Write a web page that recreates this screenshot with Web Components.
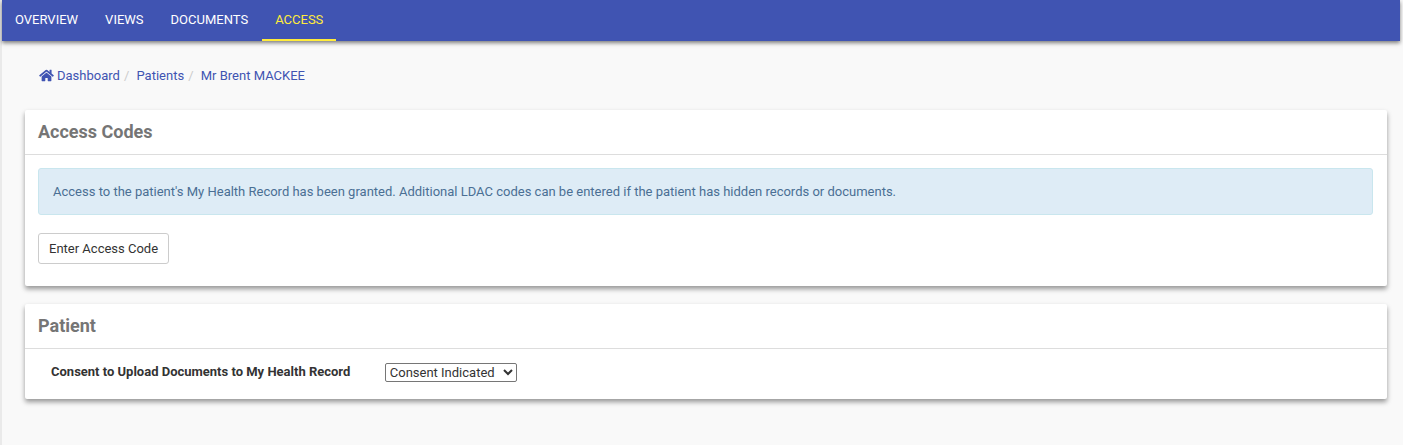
<!DOCTYPE html>
<html lang="en">
<head>
<meta charset="utf-8">
<title>Access</title>
<style>
  body {
    margin: 0;
    background: #f9f9f9;
    color: #333;
    font: 13px/18px Roboto, "Liberation Sans", sans-serif;
  }
</style>
</head>
<body>
<patient-page>
  <nav-tabs slot="nav">
    <nav-tab href="#overview">OVERVIEW</nav-tab>
    <nav-tab href="#views">VIEWS</nav-tab>
    <nav-tab href="#documents">DOCUMENTS</nav-tab>
    <nav-tab href="#access" active>ACCESS</nav-tab>
  </nav-tabs>
  <bread-crumbs>
    <bread-crumb href="#dashboard"><home-icon slot="icon"></home-icon>Dashboard</bread-crumb>
    <bread-crumb href="#patients">Patients</bread-crumb>
    <bread-crumb href="#patient">Mr Brent MACKEE</bread-crumb>
  </bread-crumbs>
  <content-card>
    <span slot="title">Access Codes</span>
    <info-alert>Access to the patient's My Health Record has been granted. Additional LDAC codes can be entered if the patient has hidden records or documents.</info-alert>
    <default-button>Enter Access Code</default-button>
  </content-card>
  <content-card compact>
    <span slot="title">Patient</span>
    <consent-field label="Consent to Upload Documents to My Health Record"></consent-field>
  </content-card>
</patient-page>

<script>
/** Attaches an open shadow root filled from the element's render() markup */
class BaseElement extends HTMLElement {
  connectedCallback() {
    if (this.shadowRoot) return;
    const template = document.createElement('template');
    template.innerHTML = this.render();
    this.attachShadow({mode: 'open'}).appendChild(template.content);
  }
}

class PatientPage extends BaseElement {
  render() {
    return `
      <style>
        :host {
          display: block;
          box-sizing: border-box;
          min-height: 100vh;
          border-left: 2px solid #eaeaea;
        }
        .nav { margin-right: 3px; }
        main {
          display: flex;
          flex-direction: column;
          gap: 18px;
          padding: 26px 16px 46px 23px;
        }
      </style>
      <div class="nav"><slot name="nav"></slot></div>
      <main><slot></slot></main>
    `;
  }
}

class NavTabs extends BaseElement {
  render() {
    return `
      <style>
        :host {
          display: block;
          background: #4054b2;
          box-shadow: 0 2px 4px rgba(0, 0, 0, .5);
        }
        nav { display: flex; gap: 1px; }
      </style>
      <nav><slot></slot></nav>
    `;
  }
}

class NavTab extends BaseElement {
  render() {
    return `
      <style>
        :host { display: block; }
        a {
          display: block;
          padding: 11px 13px 10px;
          border-bottom: 2px solid transparent;
          color: #fff;
          text-decoration: none;
        }
        :host([active]) a {
          color: #ffeb3b;
          border-color: #ffeb3b;
        }
      </style>
      <a href="${this.getAttribute('href')}"><slot></slot></a>
    `;
  }
}

class BreadCrumbs extends BaseElement {
  render() {
    return `
      <style>
        :host { display: block; padding: 0 14px 7px; }
        nav { display: flex; }
      </style>
      <nav aria-label="Breadcrumb"><slot></slot></nav>
    `;
  }
}

class BreadCrumb extends BaseElement {
  render() {
    return `
      <style>
        :host { display: block; }
        :host(:not(:first-child))::before {
          content: "/";
          padding: 0 4px;
          color: #ccc;
        }
        a { color: #4054b2; text-decoration: none; }
      </style>
      <a href="${this.getAttribute('href')}"><slot name="icon"></slot><slot></slot></a>
    `;
  }
}

class HomeIcon extends BaseElement {
  render() {
    return `
      <style>
        :host { display: inline-block; margin-right: 3px; vertical-align: -2px; }
        svg { display: block; }
      </style>
      <svg width="15" height="13" viewBox="0 0 576 512" fill="currentColor" aria-hidden="true">
        <path d="M280 148 96 300v164a16 16 0 0 0 16 16h112a16 16 0 0 0 16-16v-96a16 16 0 0 1 16-16h64a16 16 0 0 1 16 16v96a16 16 0 0 0 16 16h112a16 16 0 0 0 16-16V300L296 148a12 12 0 0 0-16 0zM572 251l-84-69V44a12 12 0 0 0-12-12h-56a12 12 0 0 0-12 12v72l-90-74a48 48 0 0 0-61 0L4 251a12 12 0 0 0-1 17l25 31a12 12 0 0 0 17 2l235-194a12 12 0 0 1 16 0l235 194a12 12 0 0 0 17-2l25-31a12 12 0 0 0-1-17z"/>
      </svg>
    `;
  }
}

class ContentCard extends BaseElement {
  render() {
    return `
      <style>
        :host {
          display: block;
          border-radius: 2px;
          background: #fff;
          box-shadow: 0 3px 5px rgba(0, 0, 0, .4);
        }
        h2 {
          margin: 0;
          padding: 12px 13px;
          border-bottom: 1px solid #ddd;
          color: #757575;
          font-size: 18px;
          line-height: 20px;
          font-weight: 700;
        }
        .body {
          display: flex;
          flex-direction: column;
          align-items: flex-start;
          gap: 18px;
          padding: 13px 14px 22px 13px;
        }
        :host([compact]) .body { padding-bottom: 17px; }
      </style>
      <h2><slot name="title"></slot></h2>
      <div class="body"><slot></slot></div>
    `;
  }
}

class InfoAlert extends BaseElement {
  render() {
    return `
      <style>
        :host {
          display: block;
          box-sizing: border-box;
          width: 100%;
          padding: 14px;
          border: 1px solid #c9e6ee;
          border-radius: 3px;
          background: #deecf6;
          color: #4a6f94;
          line-height: 17px;
        }
      </style>
      <div role="status"><slot></slot></div>
    `;
  }
}

class DefaultButton extends BaseElement {
  render() {
    return `
      <style>
        :host { display: block; }
        button {
          display: block;
          padding: 6px 10px;
          border: 1px solid #ccc;
          border-radius: 3px;
          background: #fff;
          color: #333;
          font: inherit;
          line-height: 17px;
        }
      </style>
      <button type="button"><slot></slot></button>
    `;
  }
}

class ConsentField extends BaseElement {
  render() {
    return `
      <style>
        :host {
          display: grid;
          grid-template-columns: 1fr 3fr;
          width: 100%;
        }
        label { padding: 1px 13px 0; font-weight: 700; }
        .control { padding: 1px 13px 0; }
        select {
          display: block;
          box-sizing: border-box;
          width: 132px;
          height: 19px;
          padding: 0;
          border: 1px solid #767676;
          border-radius: 2px;
          background: #fff;
          color: #333;
          font: inherit;
        }
      </style>
      <label for="consent">${this.getAttribute('label')}</label>
      <div class="control">
        <select id="consent">
          <option selected>Consent Indicated</option>
          <option>Consent Withdrawn</option>
        </select>
      </div>
    `;
  }
}

customElements.define('patient-page', PatientPage);
customElements.define('nav-tabs', NavTabs);
customElements.define('nav-tab', NavTab);
customElements.define('bread-crumbs', BreadCrumbs);
customElements.define('bread-crumb', BreadCrumb);
customElements.define('home-icon', HomeIcon);
customElements.define('content-card', ContentCard);
customElements.define('info-alert', InfoAlert);
customElements.define('default-button', DefaultButton);
customElements.define('consent-field', ConsentField);
</script>
</body>
</html>
